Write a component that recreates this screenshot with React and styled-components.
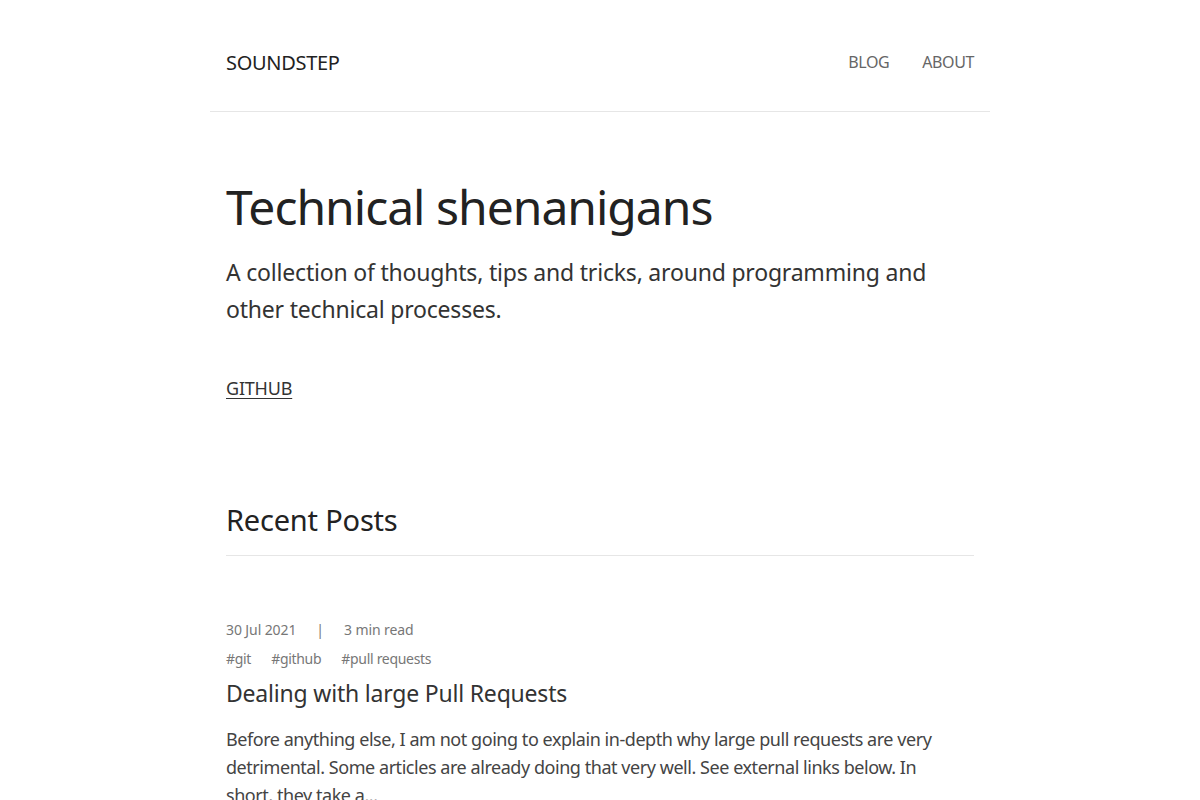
import React from 'react';
import styled, { createGlobalStyle } from 'styled-components';

const GlobalStyle = createGlobalStyle`
  * { box-sizing: border-box; }
  body {
    margin: 0;
    background: #fff;
    font-family: "Noto Sans", "Open Sans", sans-serif;
    color: #222;
  }
`;

const Page = styled.div`
  width: 780px;
  margin: 0 auto;
`;

const Header = styled.header`
  display: flex;
  align-items: center;
  justify-content: space-between;
  height: 112px;
  padding: 13px 16px 0;
  border-bottom: 1px solid #e6e6e6;
`;

const Logo = styled.a`
  font-size: 20px;
  color: #222;
  text-decoration: none;
  letter-spacing: -0.3px;
`;

const Nav = styled.nav`
  display: flex;
  gap: 33px;
`;

const NavLink = styled.a`
  font-size: 16px;
  color: #666;
  text-decoration: none;
  letter-spacing: -0.4px;
`;

const Main = styled.main`
  padding: 0 16px;
`;

const Hero = styled.section`
  padding-top: 66px;
`;

const Title = styled.h1`
  margin: 0;
  font-size: 48px;
  font-weight: 400;
  line-height: 1.2;
  letter-spacing: -1px;
  color: #222;
`;

const Lead = styled.p`
  margin: 18px 0 0;
  font-size: 23px;
  line-height: 37px;
  letter-spacing: -0.2px;
  color: #333;
`;

const Links = styled.div`
  margin-top: 48px;
`;

const Link = styled.a`
  font-size: 18px;
  color: #333;
  text-decoration: underline;
  text-underline-offset: 3px;
  letter-spacing: -0.2px;
`;

const SectionHead = styled.h2`
  margin: 103px 0 0;
  padding-bottom: 18px;
  font-size: 29px;
  font-weight: 400;
  line-height: 1.2;
  letter-spacing: -0.2px;
  color: #222;
  border-bottom: 1px solid #e6e6e6;
`;

const Post = styled.article`
  padding-top: 64px;
`;

const Meta = styled.div`
  display: flex;
  gap: 20px;
  font-size: 14px;
  color: #777;
  line-height: 20px;
  letter-spacing: -0.1px;
`;

const Tags = styled(Meta)`
  margin-top: 9px;
  letter-spacing: -0.3px;
`;

const PostTitle = styled.h3`
  margin: 8px 0 0;
  font-size: 23px;
  font-weight: 400;
  line-height: 1.4;
  letter-spacing: -0.2px;
  color: #333;
`;

const Excerpt = styled.p`
  margin: 15px 0 0;
  max-width: 720px;
  font-size: 18px;
  line-height: 28px;
  letter-spacing: -0.45px;
  color: #444;
`;

const posts = [
  {
    date: '30 Jul 2021',
    read: '3 min read',
    tags: ['git', 'github', 'pull requests'],
    title: 'Dealing with large Pull Requests',
    excerpt:
      'Before anything else, I am not going to explain in-depth why large pull requests are very detrimental. Some articles are already doing that very well. See external links below. In short, they take a...',
  },
];

export default function App() {
  return (
    <>
      <GlobalStyle />
      <Page>
        <Header>
          <Logo href="#">SOUNDSTEP</Logo>
          <Nav>
            <NavLink href="#">BLOG</NavLink>
            <NavLink href="#">ABOUT</NavLink>
          </Nav>
        </Header>
        <Main>
          <Hero>
            <Title>Technical shenanigans</Title>
            <Lead>
              A collection of thoughts, tips and tricks, around programming and other technical processes.
            </Lead>
            <Links>
              <Link href="#">GITHUB</Link>
            </Links>
          </Hero>
          <SectionHead>Recent Posts</SectionHead>
          {posts.map((post) => (
            <Post key={post.title}>
              <Meta>
                <span>{post.date}</span>
                <span>|</span>
                <span>{post.read}</span>
              </Meta>
              <Tags>
                {post.tags.map((tag) => (
                  <span key={tag}>#{tag}</span>
                ))}
              </Tags>
              <PostTitle>{post.title}</PostTitle>
              <Excerpt>{post.excerpt}</Excerpt>
            </Post>
          ))}
        </Main>
      </Page>
    </>
  );
}
